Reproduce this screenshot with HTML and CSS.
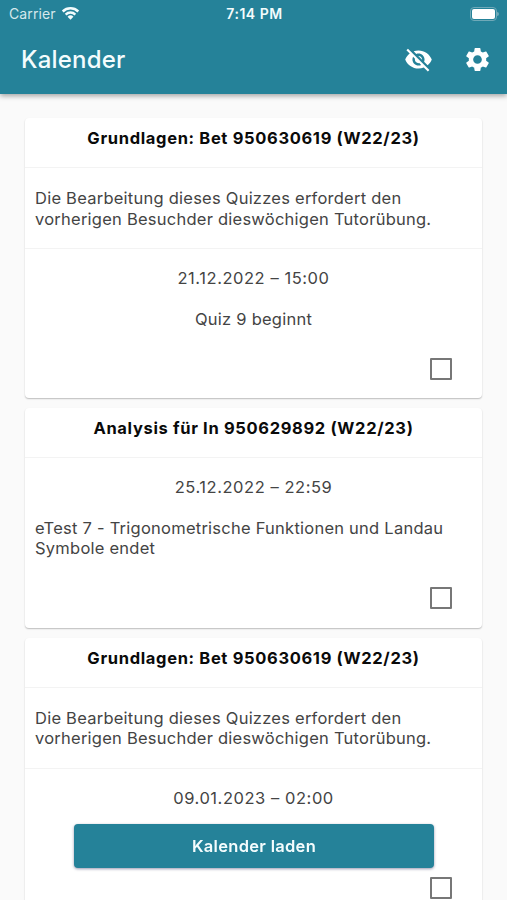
FILE: index.html
```html
<!DOCTYPE html>
<html lang="de">
<head>
	<meta charset="UTF-8">
	<meta name="viewport" content="width=device-width, initial-scale=1.0">
	<title>Kalender</title>
	<link rel="stylesheet" href="styles.css">
</head>
<body>

<header>
	<div class="status">
		<div class="carrier">
			<span>Carrier</span>
			<svg class="wifi" viewBox="0 0 20 15">
				<path d="M1.8 5.4a11.8 11.8 0 0 1 16.4 0" />
				<path d="M4.9 8.6a7.4 7.4 0 0 1 10.2 0" />
				<path class="dot" d="M10 14.2l-3.1-3.3a4.4 4.4 0 0 1 6.2 0z" />
			</svg>
		</div>
		<span class="time">7:14 PM</span>
		<div class="battery"><span></span></div>
	</div>
	<div class="toolbar">
		<h1>Kalender</h1>
		<div class="actions">
			<svg viewBox="0 0 24 24"><path d="M12 7c2.76 0 5 2.24 5 5 0 .65-.13 1.26-.36 1.83l2.92 2.92c1.51-1.26 2.7-2.89 3.43-4.75-1.73-4.39-6-7.5-11-7.5-1.4 0-2.74.25-3.98.7l2.16 2.16C10.74 7.13 11.35 7 12 7zM2 4.27l2.28 2.28.46.46C3.08 8.3 1.78 10.02 1 12c1.73 4.39 6 7.5 11 7.5 1.55 0 3.03-.3 4.38-.84l.42.42L19.73 22 21 20.73 3.27 3 2 4.27zM7.53 9.8l1.55 1.55c-.05.21-.08.43-.08.65 0 1.66 1.34 3 3 3 .22 0 .44-.03.65-.08l1.55 1.55c-.67.33-1.41.53-2.2.53-2.76 0-5-2.24-5-5 0-.79.2-1.53.53-2.2zm4.31-.78l3.15 3.15.02-.16c0-1.66-1.34-3-3-3l-.17.01z" /></svg>
			<svg viewBox="0 0 24 24"><path d="M19.14 12.94c.04-.3.06-.61.06-.94 0-.32-.02-.64-.07-.94l2.03-1.58c.18-.14.23-.41.12-.61l-1.92-3.32c-.12-.22-.37-.29-.59-.22l-2.39.96c-.5-.38-1.03-.7-1.62-.94l-.36-2.54c-.04-.24-.24-.41-.48-.41h-3.84c-.24 0-.43.17-.47.41l-.36 2.54c-.59.24-1.13.57-1.62.94l-2.39-.96c-.22-.08-.47 0-.59.22L2.74 8.87c-.12.21-.08.47.12.61l2.03 1.58c-.05.3-.09.63-.09.94s.02.64.07.94l-2.03 1.58c-.18.14-.23.41-.12.61l1.92 3.32c.12.22.37.29.59.22l2.39-.96c.5.38 1.03.7 1.62.94l.36 2.54c.05.24.24.41.48.41h3.84c.24 0 .44-.17.47-.41l.36-2.54c.59-.24 1.13-.56 1.62-.94l2.39.96c.22.08.47 0 .59-.22l1.92-3.32c.12-.22.07-.47-.12-.61l-2.01-1.58zM12 15.6c-1.98 0-3.6-1.62-3.6-3.6s1.62-3.6 3.6-3.6 3.6 1.62 3.6 3.6-1.62 3.6-3.6 3.6z" /></svg>
		</div>
	</div>
</header>

<main>
	<div class="card">
		<h2>Grundlagen: Bet 950630619 (W22/23)</h2>
		<p class="info">Die Bearbeitung dieses Quizzes erfordert den vorherigen Besuchder dieswöchigen Tutorübung.</p>
		<div class="event">
			<p class="date">21.12.2022 – 15:00</p>
			<p>Quiz 9 beginnt</p>
			<input type="checkbox">
		</div>
	</div>

	<div class="card">
		<h2>Analysis für In 950629892 (W22/23)</h2>
		<div class="event">
			<p class="date">25.12.2022 – 22:59</p>
			<p>eTest 7 - Trigonometrische Funktionen und Landau Symbole endet</p>
			<input type="checkbox">
		</div>
	</div>

	<div class="card">
		<h2>Grundlagen: Bet 950630619 (W22/23)</h2>
		<p class="info">Die Bearbeitung dieses Quizzes erfordert den vorherigen Besuchder dieswöchigen Tutorübung.</p>
		<div class="event last">
			<p class="date">09.01.2023 – 02:00</p>
			<input type="checkbox">
		</div>
	</div>
</main>

<button class="load">Kalender laden</button>

</body>
</html>
```

FILE: styles.css
```css
* {
	margin: 0;
	padding: 0;
	box-sizing: border-box;
}

body {
	font-family: Inter, "Liberation Sans", sans-serif;
	background-color: #fafafa;
	height: 100vh;
	overflow: hidden;
}

/*header*/
header {
	position: relative;
	height: 94px;
	background-color: #258299;
	color: #f4fcfd;
	box-shadow: 0 2px 5px rgba(0, 0, 0, 0.35);
}

.status {
	display: grid;
	grid-template-columns: 1fr auto 1fr;
	align-items: center;
	height: 27px;
	padding: 0 7px 0 9px;
	font-size: 14px;
}

.carrier {
	display: flex;
	align-items: center;
	gap: 5px;
	color: #d5e8ec;
	letter-spacing: 0.1px;
}

.wifi {
	width: 19px;
	height: 15px;
	fill: none;
	stroke: #f4fcfd;
	stroke-width: 2.6;
}

.wifi .dot {
	fill: #f4fcfd;
	stroke: none;
}

.time {
	font-size: 14px;
	font-weight: 600;
	letter-spacing: 0.5px;
}

.battery {
	position: relative;
	justify-self: end;
	width: 27px;
	height: 14px;
	margin-right: 3px;
	padding: 1px;
	border: 1px solid #6fa9b8;
	border-radius: 4px;
}

.battery span {
	display: block;
	height: 100%;
	background-color: white;
	border-radius: 2px;
}

.battery::after {
	content: "";
	position: absolute;
	right: -3px;
	top: 4px;
	width: 2px;
	height: 4px;
	background-color: #6fa9b8;
	border-radius: 0 2px 2px 0;
}

.toolbar {
	display: flex;
	justify-content: space-between;
	align-items: center;
	height: 65px;
	padding: 0 15px 0 21px;
}

.toolbar h1 {
	font-size: 24px;
	font-weight: 500;
	letter-spacing: 0.2px;
}

.actions {
	display: flex;
	gap: 30px;
}

.actions svg {
	width: 29px;
	height: 29px;
	fill: white;
}

/*cards*/
main {
	display: flex;
	flex-direction: column;
	gap: 10px;
	padding: 24px 25px 0;
}

.card {
	background-color: white;
	border-radius: 4px;
	box-shadow: 0 1px 1.5px rgba(0, 0, 0, 0.25);
	color: #444;
	font-size: 16.5px;
	line-height: 20.7px;
	letter-spacing: 0.24px;
}

.card h2 {
	height: 50px;
	padding-top: 10px;
	border-bottom: 1px solid #f3f3f3;
	color: #0a0a0a;
	font-size: 16.5px;
	font-weight: 700;
	letter-spacing: 0.66px;
	text-align: center;
}

.info {
	height: 81px;
	padding: 20px 10px;
	border-bottom: 1px solid #f3f3f3;
}

.event {
	display: flex;
	flex-direction: column;
	align-items: center;
	gap: 19.5px;
	padding: 19.4px 10px 18.2px;
}

.date {
	letter-spacing: 0.55px;
}

.event input {
	appearance: none;
	align-self: flex-end;
	width: 22px;
	height: 22px;
	margin: 9px 20px 0 0;
	border: 2px solid #777;
	border-radius: 1px;
}

/*last card goes on below the screen*/
.last input {
	margin-top: 49px;
}

/*button*/
.load {
	position: fixed;
	left: 74px;
	right: 73px;
	bottom: 32px;
	height: 44px;
	border: none;
	border-radius: 4px;
	background-color: #258299;
	color: #f4fcfd;
	box-shadow: 0 1px 3px rgba(0, 0, 60, 0.4);
	font-family: inherit;
	font-size: 16.5px;
	font-weight: 600;
	letter-spacing: 0.3px;
}
```
